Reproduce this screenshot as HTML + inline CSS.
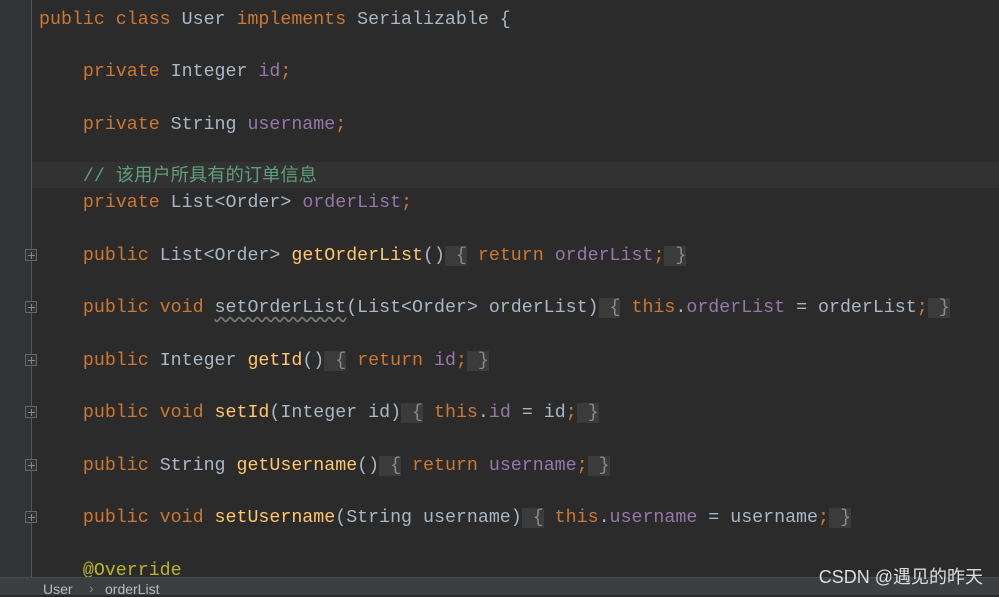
<!DOCTYPE html>
<html><head><meta charset="utf-8"><style>
body{margin:0;width:999px;height:594px;background:#2b2b2b;overflow:hidden;position:relative;font-family:"Liberation Mono","Noto Sans CJK SC",monospace;}
.g{position:absolute;left:0;top:0;width:31px;height:577px;background:#313335;border-right:1px solid #555;}
.l{position:absolute;left:39px;height:26px;line-height:26px;font-size:18.3px;color:#a9b7c6;white-space:pre;}
.k{color:#cc7832}.f{color:#9876aa}.m{color:#ffc66d}.c{color:#5f9e7f;font-family:"Liberation Mono","Noto Sans CJK SC",monospace}.a{color:#bbb529}
.b{background:#3b3b3b;color:#8a8a8a}
.hl{position:absolute;left:32px;top:162px;width:967px;height:26px;background:#323232;}
.fb{position:absolute;left:25px;width:10px;height:10px;border:1px solid #666;background:#313335;}
.fb:before{content:"";position:absolute;left:2px;top:5px;width:7px;height:1px;background:#888}
.fb:after{content:"";position:absolute;left:5px;top:2px;width:1px;height:7px;background:#888}
.w{text-decoration:underline wavy #777;text-underline-offset:4px}
.bar{position:absolute;left:0;top:577px;width:999px;height:17px;background:#3c3f41;border-top:1px solid #4a4a4a;color:#bbb;font:14px "Liberation Sans",sans-serif;}
.wm{position:absolute;right:16px;top:563px;color:#ddd;font:18px "Liberation Sans","Noto Sans CJK SC",sans-serif;}
</style></head><body>
<div class="g"></div><div class="hl"></div>
<div class="l" style="top:7px"><span class="k">public class </span>User <span class="k">implements </span>Serializable {</div>
<div class="l" style="top:59px">    <span class="k">private </span>Integer <span class="f">id</span><span class="k">;</span></div>
<div class="l" style="top:112px">    <span class="k">private </span>String <span class="f">username</span><span class="k">;</span></div>
<div class="l" style="top:164px">    <span class="c">// 该用户所具有的订单信息</span></div>
<div class="l" style="top:190px">    <span class="k">private </span>List&lt;Order&gt; <span class="f">orderList</span><span class="k">;</span></div>
<div class="fb" style="top:249px"></div>
<div class="l" style="top:243px">    <span class="k">public </span>List&lt;Order&gt; <span class="m">getOrderList</span>()<span class="b"> {</span> <span class="k">return </span><span class="f">orderList</span><span class="k">;</span><span class="b"> }</span></div>
<div class="fb" style="top:301px"></div>
<div class="l" style="top:295px">    <span class="k">public void </span><span class="w">setOrderList</span>(List&lt;Order&gt; orderList)<span class="b"> {</span> <span class="k">this</span>.<span class="f">orderList</span> = orderList<span class="k">;</span><span class="b"> }</span></div>
<div class="fb" style="top:354px"></div>
<div class="l" style="top:348px">    <span class="k">public </span>Integer <span class="m">getId</span>()<span class="b"> {</span> <span class="k">return </span><span class="f">id</span><span class="k">;</span><span class="b"> }</span></div>
<div class="fb" style="top:406px"></div>
<div class="l" style="top:400px">    <span class="k">public void </span><span class="m">setId</span>(Integer id)<span class="b"> {</span> <span class="k">this</span>.<span class="f">id</span> = id<span class="k">;</span><span class="b"> }</span></div>
<div class="fb" style="top:459px"></div>
<div class="l" style="top:453px">    <span class="k">public </span>String <span class="m">getUsername</span>()<span class="b"> {</span> <span class="k">return </span><span class="f">username</span><span class="k">;</span><span class="b"> }</span></div>
<div class="fb" style="top:511px"></div>
<div class="l" style="top:505px">    <span class="k">public void </span><span class="m">setUsername</span>(String username)<span class="b"> {</span> <span class="k">this</span>.<span class="f">username</span> = username<span class="k">;</span><span class="b"> }</span></div>
<div class="l" style="top:558px">    <span class="a">@Override</span></div>
<div class="bar"><span style="position:absolute;left:43px;top:3px">User</span><span style="position:absolute;left:89px;top:2px;color:#888">›</span><span style="position:absolute;left:105px;top:3px">orderList</span></div>
<div class="wm">CSDN @遇见的昨天</div>
</body></html>
